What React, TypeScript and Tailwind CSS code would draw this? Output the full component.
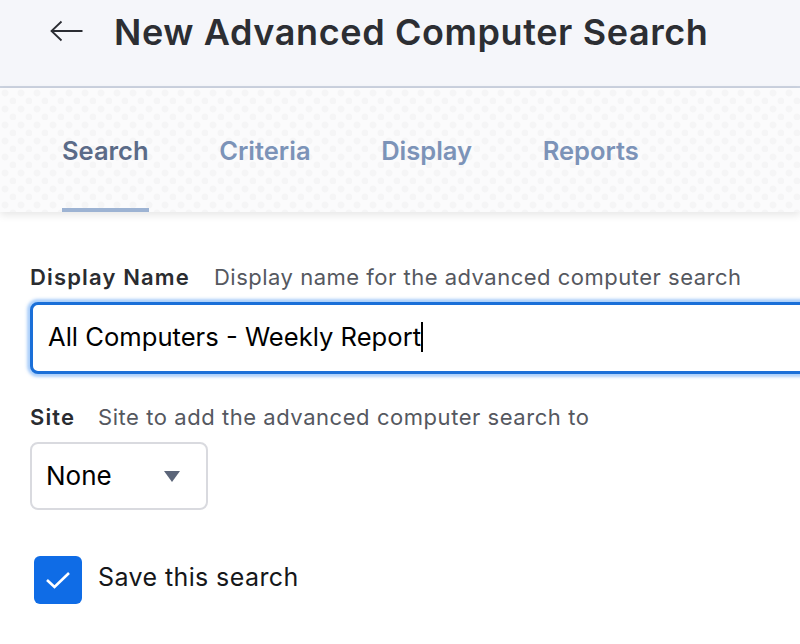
export default function App() {
  const tabs = ["Criteria", "Display", "Reports"];
  return (
    <div className="w-[800px] h-[644px] overflow-hidden bg-white font-['Inter','Liberation_Sans',sans-serif]">
      <header className="h-[88px] bg-[#f5f6fa] border-b-2 border-[#ccd3e0] flex items-start pl-[50px] pt-[11px]">
        <svg width="33" height="22" viewBox="0 0 33 22" className="mt-[9px]" fill="none" stroke="#2b2d33" strokeWidth="1.8">
          <path d="M32.5 11H1.5M11.5 1.5 1.5 11l10 9.5" />
        </svg>
        <h1 className="ml-[31px] text-[36px] leading-[42px] font-semibold text-[#2c2e33] tracking-[0.6px]">New Advanced Computer Search</h1>
      </header>
      <nav className="relative z-10 h-[124px] flex items-end pl-[62px] gap-[70.6px] bg-[#fbfbfc] bg-[radial-gradient(circle_at_5px_5px,#f5f5f6_3px,transparent_4px),radial-gradient(circle_at_13px_13px,#f5f5f6_3px,transparent_4px)] bg-[size:16px_16px] shadow-[0_3px_8px_rgba(0,0,0,0.10)]">
        <div className="h-[124px] flex flex-col justify-end">
          <span className="text-[25.5px] leading-[34px] font-semibold text-[#5b6b88] mb-[40px]">Search</span>
          <span className="h-[4px] bg-[#9db3d3]" />
        </div>
        {tabs.map((t) => (
          <span key={t} className="text-[25.5px] leading-[34px] font-semibold text-[#7c93b8] mb-[44px]">{t}</span>
        ))}
      </nav>
      <main className="pl-[30px] pt-[51px]">
        <div className="flex items-baseline text-[22px] leading-[28px]">
          <span className="font-semibold text-[#2a2c30] tracking-[1.15px]">Display Name</span>
          <span className="ml-[24px] text-[#55585f] tracking-[0.5px]">Display name for the advanced computer search</span>
        </div>
        <div className="mt-[11px] h-[72px] w-[800px] rounded-[8px] border-[3px] border-[#1a6fd8] bg-white shadow-[0_0_3px_3px_rgba(90,160,245,0.5)] flex items-center pl-[15px] pb-[2px] text-[25.6px] text-black">
          <span>All Computers - Weekly Report</span>
          <span className="w-[2px] h-[30px] bg-black" />
        </div>
        <div className="mt-[29px] flex items-baseline text-[22px] leading-[28px]">
          <span className="font-semibold text-[#2a2c30] tracking-[1.1px]">Site</span>
          <span className="ml-[23px] text-[#55585f] tracking-[0.55px]">Site to add the advanced computer search to</span>
        </div>
        <div className="mt-[11px] h-[68px] w-[178px] rounded-[8px] border-2 border-[#d9dadf] flex items-center justify-between pl-[14px] pr-[26px] pb-[2px] text-[26px] text-black">
          <span>None</span>
          <svg width="16" height="11" viewBox="0 0 16 11" className="mt-[2px]"><path d="M0 0h16L8 11z" fill="#5b6579" /></svg>
        </div>
        <div className="mt-[46px] ml-[4px] flex items-start">
          <div className="w-[48px] h-[48px] rounded-[6px] bg-[#0f6ce6] flex items-center justify-center">
            <svg width="26" height="20" viewBox="0 0 26 20" fill="none" stroke="#fff" strokeWidth="2.6">
              <path d="M2 10 9.5 17 24 3" />
            </svg>
          </div>
          <span className="ml-[16px] text-[25px] leading-[42px] text-[#15171a] tracking-[0.4px]">Save this search</span>
        </div>
      </main>
    </div>
  );
}
